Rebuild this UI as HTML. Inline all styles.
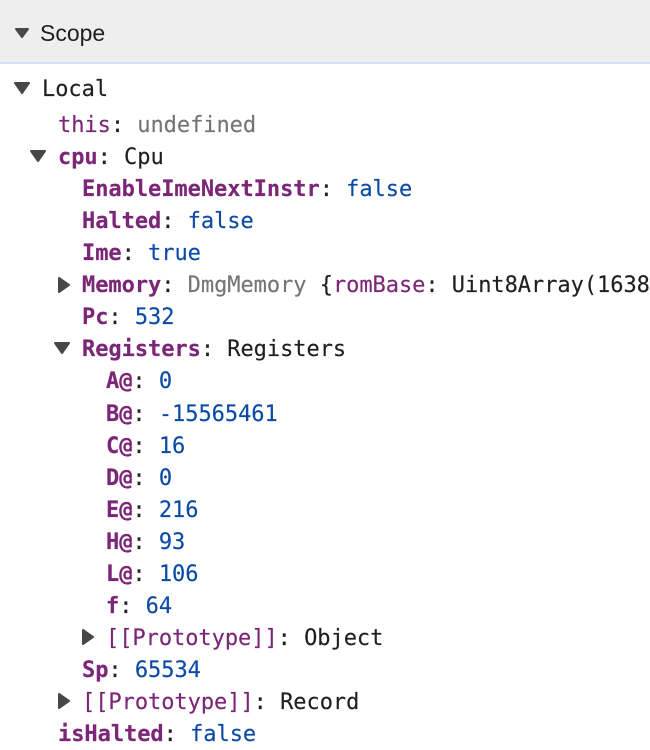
<!DOCTYPE html>
<html><head><meta charset="utf-8"><style>
html,body{margin:0;padding:0;background:#fff;width:650px;height:750px;overflow:hidden}
body{position:relative;font-family:"DejaVu Sans Mono","Liberation Mono",monospace;font-size:22px;letter-spacing:-0.04px;color:#1f1f1f}
.h{position:absolute;left:0;top:0;width:650px;height:62px;background:#eeeeee;border-bottom:2px solid #d0e2fb}
.s{position:absolute;left:40px;top:18px;font:23px/30px "Liberation Sans",sans-serif;letter-spacing:0;color:#1f1f1f}
.r{position:absolute;white-space:pre;line-height:32px;height:32px;-webkit-text-stroke:0.15px currentColor}
.k{color:#7b2676}.b{font-weight:bold;color:#7b2676}.g{color:#757575}.n{color:#0b4aa6}
svg{position:absolute;left:0;top:0}
</style></head><body>
<div class="h"></div><div class="s">Scope</div>
<svg width="650" height="750" fill="#474747" stroke="#474747" stroke-width="2" stroke-linejoin="round">
<path d="M16 29h12l-6 8z"/>
<path d="M15 83h14l-7 10z"/>
<path d="M31 151h14l-7 10z"/>
<path d="M59 278l10 7-10 7z"/>
<path d="M55 343h14l-7 10z"/>
<path d="M83 630l10 7-10 7z"/>
<path d="M59 694l10 7-10 7z"/>
</svg>
<div class="r" style="left:42px;top:74px">Local</div>
<div class="r" style="left:58px;top:110px"><span class="k">this</span>: <span class="g">undefined</span></div>
<div class="r" style="left:58px;top:142px"><span class="b">cpu</span>: Cpu</div>
<div class="r" style="left:82px;top:174px"><span class="b">EnableImeNextInstr</span>: <span class="n">false</span></div>
<div class="r" style="left:82px;top:206px"><span class="b">Halted</span>: <span class="n">false</span></div>
<div class="r" style="left:82px;top:238px"><span class="b">Ime</span>: <span class="n">true</span></div>
<div class="r" style="left:82px;top:270px"><span class="b">Memory</span>: <span class="g">DmgMemory</span> {<span class="k">romBase</span>: Uint8Array(1638</div>
<div class="r" style="left:82px;top:302px"><span class="b">Pc</span>: <span class="n">532</span></div>
<div class="r" style="left:82px;top:334px"><span class="b">Registers</span>: Registers</div>
<div class="r" style="left:106px;top:366px"><span class="b">A@</span>: <span class="n">0</span></div>
<div class="r" style="left:106px;top:399px"><span class="b">B@</span>: <span class="n">-15565461</span></div>
<div class="r" style="left:106px;top:431px"><span class="b">C@</span>: <span class="n">16</span></div>
<div class="r" style="left:106px;top:463px"><span class="b">D@</span>: <span class="n">0</span></div>
<div class="r" style="left:106px;top:495px"><span class="b">E@</span>: <span class="n">216</span></div>
<div class="r" style="left:106px;top:527px"><span class="b">H@</span>: <span class="n">93</span></div>
<div class="r" style="left:106px;top:559px"><span class="b">L@</span>: <span class="n">106</span></div>
<div class="r" style="left:106px;top:591px"><span class="b">f</span>: <span class="n">64</span></div>
<div class="r" style="left:106px;top:623px"><span class="k">[[Prototype]]</span>: Object</div>
<div class="r" style="left:82px;top:655px"><span class="b">Sp</span>: <span class="n">65534</span></div>
<div class="r" style="left:82px;top:687px"><span class="k">[[Prototype]]</span>: Record</div>
<div class="r" style="left:58px;top:719px"><span class="b">isHalted</span>: <span class="n">false</span></div>
</body></html>
